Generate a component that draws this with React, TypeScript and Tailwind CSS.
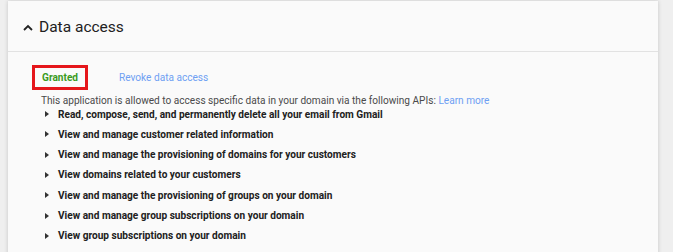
import React from 'react'

const scopes = [
  'Read, compose, send, and permanently delete all your email from Gmail',
  'View and manage customer related information',
  'View and manage the provisioning of domains for your customers',
  'View domains related to your customers',
  'View and manage the provisioning of groups on your domain',
  'View and manage group subscriptions on your domain',
  'View group subscriptions on your domain',
  'View and manage your domain',
]

function ScopeRow({ label }: { label: string }) {
  return (
    <li className="flex items-center h-[20.3px]">
      <svg width="4" height="6" viewBox="0 0 4 6" className="ml-[4px] mr-[9px] shrink-0">
        <path d="M0 0 L4 3 L0 6 Z" fill="#333" />
      </svg>
      <span className="text-[10.1px] font-bold text-[#212121] whitespace-nowrap">{label}</span>
    </li>
  )
}

export default function App() {
  return (
    <div
      className="w-[673px] h-[252px] overflow-hidden bg-[#efefef] pt-px pl-[8px]"
      style={{ fontFamily: 'Roboto, "Liberation Sans", sans-serif' }}
    >
      <div className="w-[650px] h-[260px] bg-[#fafafa] shadow-[0_0_4px_rgba(0,0,0,0.18)]">
        <div className="h-[51px] border-b border-[#e2e2e2] flex items-center pl-[15px]">
          <svg width="10" height="7" viewBox="0 0 10 7" className="mr-[6px] mt-[3px]">
            <path d="M1 6 L5 2 L9 6" fill="none" stroke="#222" strokeWidth="1.8" />
          </svg>
          <span className="text-[15.5px] text-[#212121] mt-[3px]">Data access</span>
        </div>
        <div className="pl-[24px] pt-[13px]">
          <div className="flex items-center">
            <div className="h-[25px] w-[56px] border-[3px] border-[#e5161b] flex items-center pl-[7px]">
              <span className="text-[10.1px] font-bold text-[#3a9a1e]">Granted</span>
            </div>
            <span className="ml-[31px] text-[10.1px] text-[#6e9ff3]">Revoke data access</span>
          </div>
          <div className="pl-[9px]">
            <p className="text-[10.1px] text-[#4a4a4a] leading-[14px] mt-[4px] whitespace-nowrap">
              This application is allowed to access specific data in your domain via the following APIs:{' '}
              <span className="text-[#6e9ff3]">Learn more</span>
            </p>
            <ul className="mt-[-4px]">
              {scopes.map((s) => (
                <ScopeRow key={s} label={s} />
              ))}
            </ul>
          </div>
        </div>
      </div>
    </div>
  )
}
